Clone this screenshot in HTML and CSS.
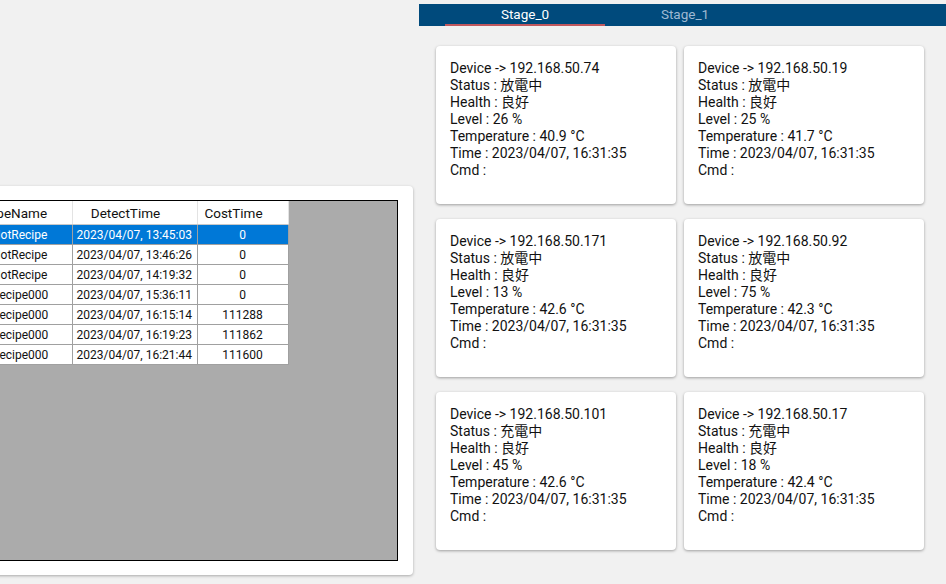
FILE: index.html
```html
<!DOCTYPE html>
<html>
<head>
<meta charset="utf-8">
<link rel="stylesheet" href="styles.css">
</head>
<body>
<div class="page">
  <section class="left">
    <div class="panel">
      <div class="grid-area">
        <table class="grid">
          <colgroup><col class="c1"><col class="c2"><col class="c3"></colgroup>
          <thead>
            <tr><th>TypeName</th><th>DetectTime</th><th>CostTime</th></tr>
          </thead>
          <tbody>
            <tr class="sel"><td class="name">NotRecipe</td><td>2023/04/07, 13:45:03</td><td class="num">0</td></tr>
            <tr><td class="name">NotRecipe</td><td>2023/04/07, 13:46:26</td><td class="num">0</td></tr>
            <tr><td class="name">NotRecipe</td><td>2023/04/07, 14:19:32</td><td class="num">0</td></tr>
            <tr><td class="name">Recipe000</td><td>2023/04/07, 15:36:11</td><td class="num">0</td></tr>
            <tr><td class="name">Recipe000</td><td>2023/04/07, 16:15:14</td><td class="num">111288</td></tr>
            <tr><td class="name">Recipe000</td><td>2023/04/07, 16:19:23</td><td class="num">111862</td></tr>
            <tr><td class="name">Recipe000</td><td>2023/04/07, 16:21:44</td><td class="num">111600</td></tr>
          </tbody>
        </table>
      </div>
    </div>
  </section>
  <section class="right">
    <nav class="tabs">
      <div class="tab active">Stage_0</div>
      <div class="tab">Stage_1</div>
    </nav>
    <div class="cards">
      <div class="card">
        <div>Device -&gt; 192.168.50.74</div>
        <div>Status : 放電中</div>
        <div>Health : 良好</div>
        <div>Level : 26 %</div>
        <div>Temperature : 40.9 °C</div>
        <div>Time : 2023/04/07, 16:31:35</div>
        <div>Cmd :</div>
      </div>
      <div class="card">
        <div>Device -&gt; 192.168.50.19</div>
        <div>Status : 放電中</div>
        <div>Health : 良好</div>
        <div>Level : 25 %</div>
        <div>Temperature : 41.7 °C</div>
        <div>Time : 2023/04/07, 16:31:35</div>
        <div>Cmd :</div>
      </div>
      <div class="card">
        <div>Device -&gt; 192.168.50.171</div>
        <div>Status : 放電中</div>
        <div>Health : 良好</div>
        <div>Level : 13 %</div>
        <div>Temperature : 42.6 °C</div>
        <div>Time : 2023/04/07, 16:31:35</div>
        <div>Cmd :</div>
      </div>
      <div class="card">
        <div>Device -&gt; 192.168.50.92</div>
        <div>Status : 放電中</div>
        <div>Health : 良好</div>
        <div>Level : 75 %</div>
        <div>Temperature : 42.3 °C</div>
        <div>Time : 2023/04/07, 16:31:35</div>
        <div>Cmd :</div>
      </div>
      <div class="card">
        <div>Device -&gt; 192.168.50.101</div>
        <div>Status : 充電中</div>
        <div>Health : 良好</div>
        <div>Level : 45 %</div>
        <div>Temperature : 42.6 °C</div>
        <div>Time : 2023/04/07, 16:31:35</div>
        <div>Cmd :</div>
      </div>
      <div class="card">
        <div>Device -&gt; 192.168.50.17</div>
        <div>Status : 充電中</div>
        <div>Health : 良好</div>
        <div>Level : 18 %</div>
        <div>Temperature : 42.4 °C</div>
        <div>Time : 2023/04/07, 16:31:35</div>
        <div>Cmd :</div>
      </div>
    </div>
  </section>
</div>
</body>
</html>
```
FILE: styles.css
```css
html, body {
  margin: 0;
  padding: 0;
  background: #f1f1f1;
  width: 946px;
  height: 584px;
  overflow: hidden;
  font-family: Roboto, "Noto Sans CJK TC", sans-serif;
  color: #1a1a1a;
}

.page {
  display: flex;
  align-items: flex-start;
  width: 946px;
  height: 584px;
}

.left {
  width: 419px;
  flex: none;
  padding-top: 186px;
}

.panel {
  margin-left: -42px;
  width: 425px;
  height: 361px;
  padding: 14px 15px 14px 15px;
  background: #fff;
  border-radius: 4px;
  box-shadow: 0 1px 3px rgba(0, 0, 0, 0.3);
}

.grid-area {
  height: 359px;
  background: #ababab;
  border: 1px solid #000;
}

.grid {
  border-collapse: collapse;
  table-layout: fixed;
  width: 312px;
  margin-left: 2px;
  font-family: Roboto, sans-serif;
}

.c1 { width: 96px; }
.c2 { width: 125px; }
.c3 { width: 91px; }

.grid th {
  height: 23px;
  padding: 0 18px 0 0;
  background: #fff;
  font-weight: normal;
  font-size: 13.5px;
  color: #111;
  text-align: center;
  border-right: 1px solid #e3e3e3;
  border-bottom: 1px solid #c8c8c8;
}

.grid td {
  height: 19px;
  padding: 0 0 0 4px;
  font-size: 12px;
  color: #111;
  background: #fff;
  border-right: 1px solid #a0a0a0;
  border-bottom: 1px solid #a0a0a0;
  white-space: nowrap;
  overflow: hidden;
}

.grid td.name {
  padding-left: 16px;
}

.grid td.num {
  text-align: center;
  padding-left: 0;
}

.grid tr.sel td {
  background: #0078d7;
  color: #fff;
}

.right {
  flex: 1;
  padding-top: 4px;
}

.tabs {
  display: flex;
  height: 22px;
  padding-left: 26px;
  background: #004a7c;
}

.tab {
  width: 160px;
  height: 20px;
  line-height: 21px;
  text-align: center;
  font-size: 13.5px;
  color: #9fb9d3;
  border-bottom: 2px solid transparent;
}

.tab.active {
  color: #fff;
  border-bottom-color: #c0585e;
}

.cards {
  display: grid;
  grid-template-columns: 240px 240px;
  grid-auto-rows: 158px;
  column-gap: 8px;
  row-gap: 15px;
  padding: 20px 0 0 17px;
}

.card {
  background: #fff;
  border-radius: 4px;
  box-shadow: 0 1px 3px rgba(0, 0, 0, 0.35);
  padding: 14px 14px 0 14px;
  font-size: 14px;
  line-height: 17px;
  color: #111;
}
```
